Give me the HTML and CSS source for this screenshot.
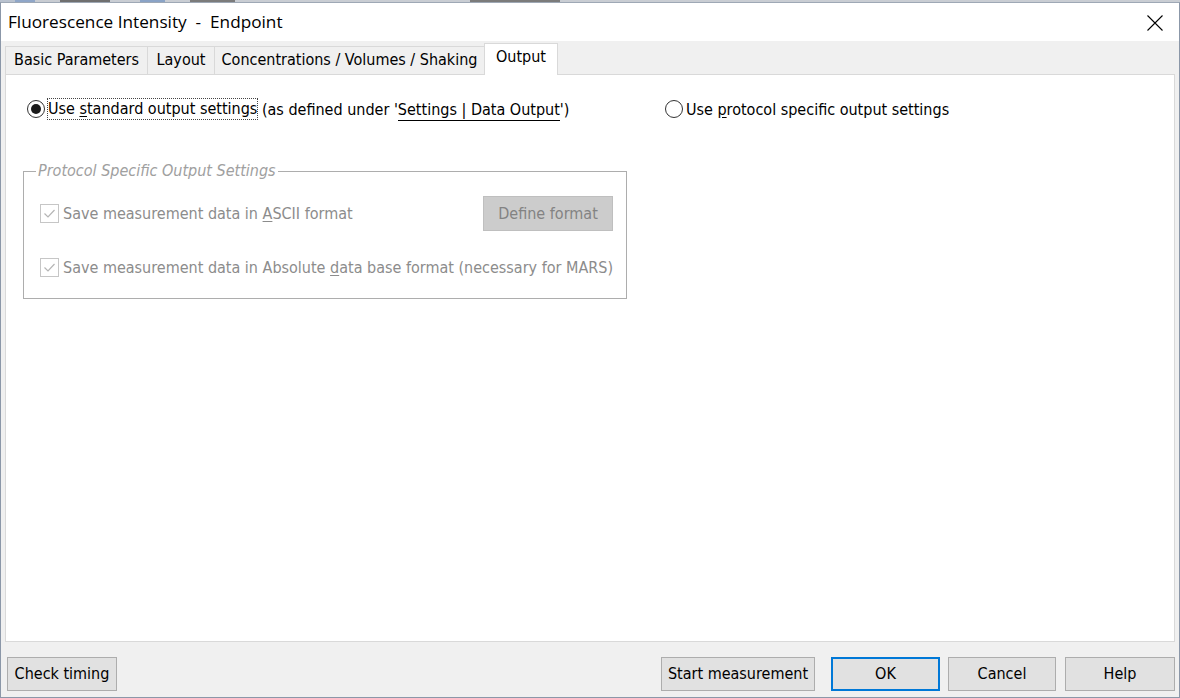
FILE: index.html
```html
<!DOCTYPE html>
<html>
<head>
<meta charset="utf-8">
<link rel="stylesheet" href="styles.css">
</head>
<body>
<div class="strip"></div>
<div class="window">
  <div class="titlebar">
    <span class="title">Fluorescence Intensity&nbsp; - &nbsp;Endpoint</span>
    <svg class="close" width="16" height="16" viewBox="0 0 16 16"><path d="M0.5 0.5 L15.5 15.5 M15.5 0.5 L0.5 15.5" stroke="#000" stroke-width="1.1" fill="none"/></svg>
  </div>
  <div class="tabs">
    <div class="tab t1">Basic Parameters</div>
    <div class="tab t2">Layout</div>
    <div class="tab t3">Concentrations / Volumes / Shaking</div>
    <div class="tab active">Output</div>
  </div>
  <div class="panel">
    <div class="radios">
      <div class="radio-row r1">
        <span class="radio checked"><span class="dot"></span></span>
        <span class="focus">Use <u>s</u>tandard output settings</span>
        <span class="rest">&nbsp;(as defined under '<span class="link">Settings | Data Output</span>')</span>
      </div>
      <div class="radio-row r2">
        <span class="radio"></span>
        <span>Use <u>p</u>rotocol specific output settings</span>
      </div>
    </div>
    <fieldset class="group">
      <legend>Protocol Specific Output Settings</legend>
      <div class="chk-row first">
        <span class="chk"><svg width="13" height="13" viewBox="0 0 13 13"><path d="M1.5 6.5 L5 10 L11.5 3" stroke="#b5b5b5" stroke-width="1.2" fill="none"/></svg></span>
        <span class="chk-label">Save measurement data in <u>A</u>SCII format</span>
        <span class="btn-disabled">Define format</span>
      </div>
      <div class="chk-row second">
        <span class="chk"><svg width="13" height="13" viewBox="0 0 13 13"><path d="M1.5 6.5 L5 10 L11.5 3" stroke="#b5b5b5" stroke-width="1.2" fill="none"/></svg></span>
        <span class="chk-label">Save measurement data in Absolute <u>d</u>ata base format (necessary for MARS)</span>
      </div>
    </fieldset>
  </div>
  <div class="footer">
    <button class="btn b-check">Check timing</button>
    <div class="spacer"></div>
    <button class="btn b-start">Start measurement</button>
    <button class="btn b-ok">OK</button>
    <button class="btn b-cancel">Cancel</button>
    <button class="btn b-help">Help</button>
  </div>
</div>
</body>
</html>
```
FILE: styles.css
```css
html, body {
  margin: 0;
  padding: 0;
  width: 1180px;
  height: 698px;
  overflow: hidden;
  background: #f0f0f0;
}
body {
  font-family: "DejaVu Sans Condensed", "DejaVu Sans", sans-serif;
  font-size: 16px;
  color: #000;
}
.strip {
  height: 2px;
  background: linear-gradient(90deg, #b9c2cf 0, #b9c2cf 15px, #8fa6c8 15px, #8fa6c8 35px, #c8ccd2 35px, #c8ccd2 60px, #6f6f6f 60px, #6f6f6f 110px, #c9cdd3 110px, #c9cdd3 140px, #8aa3c6 140px, #8aa3c6 165px, #c9cdd3 165px, #c9cdd3 190px, #7b7b7b 190px, #7b7b7b 235px, #c9cdd3 235px, #c9cdd3 470px, #7b7b7b 470px, #7b7b7b 560px, #c9cdd3 560px);
}
.window {
  height: 694px;
  border: 1px solid #8b97a8;
  border-top-color: #9ea8b5;
  display: flex;
  flex-direction: column;
  background: #f0f0f0;
}
.titlebar {
  height: 38px;
  background: #fff;
  display: flex;
  align-items: center;
  padding-left: 7px;
  padding-right: 16px;
  flex-shrink: 0;
}
.title {
  font-family: "Open Sans", "Noto Sans", sans-serif;
  font-size: 17.2px;
  color: #000;
  flex: 1;
  padding-bottom: 2px;
}
.close {
  margin-top: 1px;
}
.tabs {
  display: flex;
  align-items: flex-end;
  padding-left: 4px;
  height: 33px;
  flex-shrink: 0;
}
.tab {
  height: 28px;
  box-sizing: border-box;
  border: 1px solid #d9d9d9;
  border-bottom: none;
  background: #f0f0f0;
  display: flex;
  align-items: center;
  justify-content: center;
  margin-right: -1px;
  padding-bottom: 2px;
}
.t1 { width: 143px; }
.t2 { width: 68px; }
.t3 { width: 271px; }
.active {
  width: 74px;
  height: 32px;
  background: #fff;
  position: relative;
  z-index: 2;
  margin-bottom: -1px;
  padding-bottom: 6px;
}
.panel {
  height: 568px;
  margin: 0 4px;
  background: #fff;
  border: 1px solid #d9d9d9;
  box-sizing: border-box;
  flex-shrink: 0;
  padding-top: 20px;
}
.radios {
  display: flex;
  height: 28px;
  align-items: center;
}
.radio-row {
  display: flex;
  align-items: center;
  white-space: nowrap;
}
.r1 {
  margin-left: 21px;
  width: 638px;
}
.radio {
  width: 18px;
  height: 18px;
  box-sizing: border-box;
  border: 1px solid #333;
  border-radius: 50%;
  display: inline-flex;
  align-items: center;
  justify-content: center;
  margin-right: 3px;
  background: #fff;
}
.dot {
  width: 10px;
  height: 10px;
  border-radius: 50%;
  background: #1a1a1a;
}
.focus {
  outline: 1px dotted #444;
  outline-offset: 0px;
  padding: 0 0 1px 0;
}
.link {
  border-bottom: 1px solid #000;
  padding-bottom: 1px;
}
u {
  text-underline-offset: 2px;
}
.group {
  margin: 40px 0 0 17px;
  width: 604px;
  height: 136px;
  box-sizing: border-box;
  border: 1px solid #adadad;
  padding: 0;
}
.group legend {
  font-style: italic;
  color: #a0a0a0;
  padding: 0 2px;
  margin-left: 12px;
  line-height: 16px;
}
.chk-row {
  display: flex;
  align-items: center;
  padding-left: 16px;
  white-space: nowrap;
  color: #8c8c8c;
}
.first {
  height: 36px;
  margin-top: 16px;
}
.second {
  margin-top: 25px;
  height: 22px;
}
.chk {
  width: 19px;
  height: 19px;
  box-sizing: border-box;
  border: 1px solid #c6c6c6;
  display: inline-flex;
  align-items: center;
  justify-content: center;
  margin-right: 4px;
  background: #fff;
}
.chk-label {
  flex: 1;
}
.btn-disabled {
  width: 130px;
  height: 35px;
  box-sizing: border-box;
  background: #cccccc;
  border: 1px solid #bfbfbf;
  color: #838383;
  display: flex;
  align-items: center;
  justify-content: center;
  margin-right: 13px;
}
.footer {
  display: flex;
  align-items: center;
  padding: 8px 4px 0 6px;
  flex: 1;
}
.spacer { flex: 1; }
.btn {
  font-family: inherit;
  font-size: 16px;
  height: 34px;
  box-sizing: border-box;
  background: #e1e1e1;
  border: 1px solid #adadad;
  color: #000;
  padding: 0;
  margin: 0;
}
.b-check { width: 110px; }
.b-start { width: 154px; }
.b-ok {
  width: 109px;
  margin-left: 16px;
  border: 2px solid #0078d7;
}
.b-cancel { width: 108px; margin-left: 8px; }
.b-help { width: 110px; margin-left: 9px; }
```
